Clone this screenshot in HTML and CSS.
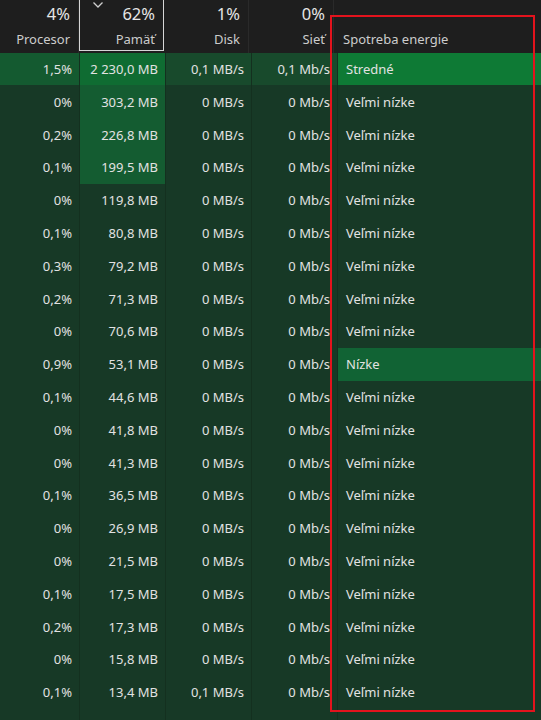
FILE: index.html
```html
<!DOCTYPE html>
<html lang="sk">
<head>
    <meta charset="UTF-8">
    <meta name="viewport" content="width=device-width, initial-scale=1.0">
    <title>Správca úloh</title>
    <link rel="stylesheet" href="styles.css">
</head>
<body>
    <div class="task-table">
        <div class="head-row">
            <div class="head-cell">
                <span class="head-value">4%</span>
                <span class="head-label">Procesor</span>
            </div>
            <div class="head-cell sorted">
                <svg class="sort-arrow" width="12" height="8" viewBox="0 0 12 8"><polyline points="1.5,1.5 6,6 10.5,1.5" fill="none" stroke="#cfcfcf" stroke-width="1.3"/></svg>
                <span class="head-value">62%</span>
                <span class="head-label">Pamäť</span>
            </div>
            <div class="head-cell">
                <span class="head-value">1%</span>
                <span class="head-label">Disk</span>
            </div>
            <div class="head-cell">
                <span class="head-value">0%</span>
                <span class="head-label">Sieť</span>
            </div>
            <div class="head-cell text-col">
                <span class="head-value"></span>
                <span class="head-label">Spotreba energie</span>
            </div>
        </div>

        <div class="row">
            <div class="cell cpu-mid">1,5%</div>
            <div class="cell mem-top">2 230,0 MB</div>
            <div class="cell io-low">0,1 MB/s</div>
            <div class="cell io-low">0,1 Mb/s</div>
            <div class="cell text-col power-mid">Stredné</div>
        </div>
        <div class="row">
            <div class="cell">0%</div>
            <div class="cell mem-high">303,2 MB</div>
            <div class="cell">0 MB/s</div>
            <div class="cell">0 Mb/s</div>
            <div class="cell text-col">Veľmi nízke</div>
        </div>
        <div class="row">
            <div class="cell">0,2%</div>
            <div class="cell mem-high">226,8 MB</div>
            <div class="cell">0 MB/s</div>
            <div class="cell">0 Mb/s</div>
            <div class="cell text-col">Veľmi nízke</div>
        </div>
        <div class="row">
            <div class="cell">0,1%</div>
            <div class="cell mem-high">199,5 MB</div>
            <div class="cell">0 MB/s</div>
            <div class="cell">0 Mb/s</div>
            <div class="cell text-col">Veľmi nízke</div>
        </div>
        <div class="row">
            <div class="cell">0%</div>
            <div class="cell">119,8 MB</div>
            <div class="cell">0 MB/s</div>
            <div class="cell">0 Mb/s</div>
            <div class="cell text-col">Veľmi nízke</div>
        </div>
        <div class="row">
            <div class="cell">0,1%</div>
            <div class="cell">80,8 MB</div>
            <div class="cell">0 MB/s</div>
            <div class="cell">0 Mb/s</div>
            <div class="cell text-col">Veľmi nízke</div>
        </div>
        <div class="row">
            <div class="cell">0,3%</div>
            <div class="cell">79,2 MB</div>
            <div class="cell">0 MB/s</div>
            <div class="cell">0 Mb/s</div>
            <div class="cell text-col">Veľmi nízke</div>
        </div>
        <div class="row">
            <div class="cell">0,2%</div>
            <div class="cell">71,3 MB</div>
            <div class="cell">0 MB/s</div>
            <div class="cell">0 Mb/s</div>
            <div class="cell text-col">Veľmi nízke</div>
        </div>
        <div class="row">
            <div class="cell">0%</div>
            <div class="cell">70,6 MB</div>
            <div class="cell">0 MB/s</div>
            <div class="cell">0 Mb/s</div>
            <div class="cell text-col">Veľmi nízke</div>
        </div>
        <div class="row">
            <div class="cell">0,9%</div>
            <div class="cell">53,1 MB</div>
            <div class="cell">0 MB/s</div>
            <div class="cell">0 Mb/s</div>
            <div class="cell text-col power-low">Nízke</div>
        </div>
        <div class="row">
            <div class="cell">0,1%</div>
            <div class="cell">44,6 MB</div>
            <div class="cell">0 MB/s</div>
            <div class="cell">0 Mb/s</div>
            <div class="cell text-col">Veľmi nízke</div>
        </div>
        <div class="row">
            <div class="cell">0%</div>
            <div class="cell">41,8 MB</div>
            <div class="cell">0 MB/s</div>
            <div class="cell">0 Mb/s</div>
            <div class="cell text-col">Veľmi nízke</div>
        </div>
        <div class="row">
            <div class="cell">0%</div>
            <div class="cell">41,3 MB</div>
            <div class="cell">0 MB/s</div>
            <div class="cell">0 Mb/s</div>
            <div class="cell text-col">Veľmi nízke</div>
        </div>
        <div class="row">
            <div class="cell">0,1%</div>
            <div class="cell">36,5 MB</div>
            <div class="cell">0 MB/s</div>
            <div class="cell">0 Mb/s</div>
            <div class="cell text-col">Veľmi nízke</div>
        </div>
        <div class="row">
            <div class="cell">0%</div>
            <div class="cell">26,9 MB</div>
            <div class="cell">0 MB/s</div>
            <div class="cell">0 Mb/s</div>
            <div class="cell text-col">Veľmi nízke</div>
        </div>
        <div class="row">
            <div class="cell">0%</div>
            <div class="cell">21,5 MB</div>
            <div class="cell">0 MB/s</div>
            <div class="cell">0 Mb/s</div>
            <div class="cell text-col">Veľmi nízke</div>
        </div>
        <div class="row">
            <div class="cell">0,1%</div>
            <div class="cell">17,5 MB</div>
            <div class="cell">0 MB/s</div>
            <div class="cell">0 Mb/s</div>
            <div class="cell text-col">Veľmi nízke</div>
        </div>
        <div class="row">
            <div class="cell">0,2%</div>
            <div class="cell">17,3 MB</div>
            <div class="cell">0 MB/s</div>
            <div class="cell">0 Mb/s</div>
            <div class="cell text-col">Veľmi nízke</div>
        </div>
        <div class="row">
            <div class="cell">0%</div>
            <div class="cell">15,8 MB</div>
            <div class="cell">0 MB/s</div>
            <div class="cell">0 Mb/s</div>
            <div class="cell text-col">Veľmi nízke</div>
        </div>
        <div class="row">
            <div class="cell">0,1%</div>
            <div class="cell">13,4 MB</div>
            <div class="cell">0,1 MB/s</div>
            <div class="cell">0 Mb/s</div>
            <div class="cell text-col">Veľmi nízke</div>
        </div>
        <div class="row">
            <div class="cell">0%</div>
            <div class="cell">12,4 MB</div>
            <div class="cell">0 MB/s</div>
            <div class="cell">0 Mb/s</div>
            <div class="cell text-col">Veľmi nízke</div>
        </div>

        <!-- highlight frame around the power column -->
        <div class="highlight-box"></div>
    </div>
</body>
</html>
```

FILE: styles.css
```css
/* Dark task manager table */
body {
    margin: 0;
    padding: 0;
    background-color: #1d1d1d;
    font-family: "Noto Sans", "Open Sans", sans-serif;
    overflow: hidden;
}

.task-table {
    position: relative;
    width: 541px;
    height: 720px;
    overflow: hidden;
}

.head-row,
.row {
    display: grid;
    grid-template-columns: 79px 85px 85px 85px 1fr;
}

.head-row {
    height: 52.6px;
    background-color: #1e1e1e;
}

.head-cell {
    position: relative;
    display: flex;
    flex-direction: column;
    align-items: flex-end;
    padding: 3px 8px 0 0;
    border-right: 1px solid #2a2a2a;
    box-sizing: border-box;
}

.head-cell.text-col {
    align-items: flex-start;
    padding-left: 9px;
    border-right: none;
}

.head-cell.sorted {
    border: 1px solid #d6d6d6;
    border-top: none;
    height: 51px;
}

.sort-arrow {
    position: absolute;
    top: 1px;
    left: 12px;
}

.head-value {
    height: 22px;
    font-size: 16.5px;
    line-height: 22px;
    color: #e6e6e6;
}

.head-label {
    margin-top: 5px;
    font-size: 13px;
    line-height: 18px;
    color: #cccccc;
}

.row {
    height: 32.8px;
    background-color: #14301f;
    column-gap: 1px;
}

.cell {
    display: flex;
    align-items: center;
    justify-content: flex-end;
    padding-right: 7px;
    background-color: #173926;
    font-size: 13px;
    color: #e2e2e2;
    white-space: nowrap;
}

.cell.text-col {
    justify-content: flex-start;
    padding-left: 8px;
    padding-right: 0;
}

/* heat shades */
.cpu-mid { background-color: #145a30; }
.mem-top { background-color: #0f6c32; }
.mem-high { background-color: #145c31; }
.io-low { background-color: #184a2c; }
.power-mid { background-color: #0e7a35; }
.power-low { background-color: #116334; }

.highlight-box {
    position: absolute;
    left: 330px;
    top: 15px;
    width: 201px;
    height: 693px;
    border: 2px solid #e3131d;
    pointer-events: none;
}
```
